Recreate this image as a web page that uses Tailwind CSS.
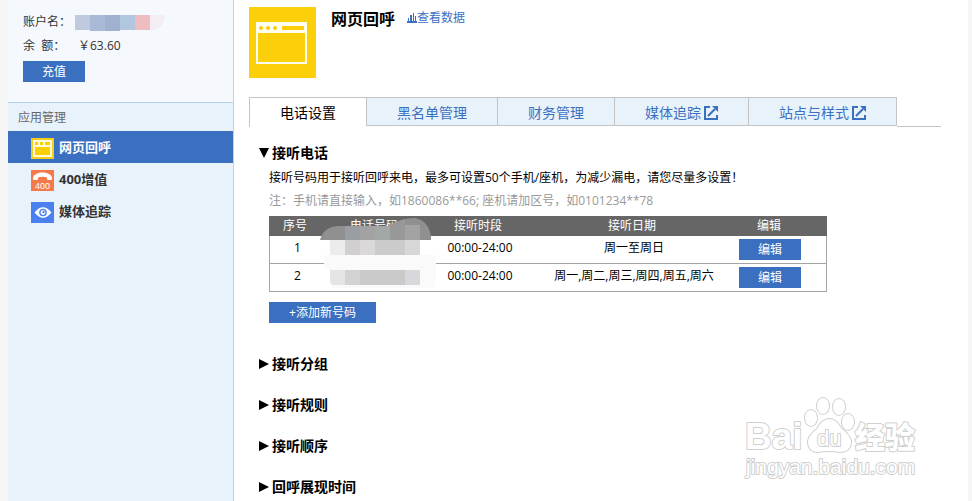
<!DOCTYPE html>
<html lang="zh-CN">
<head>
    <meta charset="UTF-8">
    <meta name="viewport" content="width=device-width, initial-scale=1.0">
    <title>网页回呼</title>
    <script src="https://cdn.jsdelivr.net/npm/@tailwindcss/browser@4"></script>
</head>
<body class="bg-[#f5f5f5] font-['Open_Sans','Noto_Sans_CJK_SC',sans-serif] text-xs text-black">

    <div class="relative flex min-h-screen pl-2 pr-1">

        <!-- Sidebar -->
        <aside class="w-[226px] shrink-0 border-r border-[#c3d3e2] bg-[#e8f2fb]">
            <div class="border-b border-[#b5cfe6] bg-[#f5f9fe] px-[15px] pt-3 pb-5 leading-5 text-[#333]">
                <div class="flex items-center">
                    <span class="w-[52px] whitespace-nowrap">账户名：</span>
                    <svg class="h-[17px] w-[90px]" viewBox="0 0 90 17" aria-hidden="true">
                        <path d="M0 1h15v15H0z" fill="#bfcadf"/>
                        <path d="M15 1h15v16H15z" fill="#a9bad6"/>
                        <path d="M30 1h15v16H30z" fill="#a0b1cf"/>
                        <path d="M45 1h15v15H45z" fill="#b1c6df"/>
                        <path d="M60 1h15v15H60z" fill="#edbdc1"/>
                        <path d="M75 1h15q-1 12-10 15h-5z" fill="#f4eef4"/>
                    </svg>
                </div>
                <div class="mt-1 flex">
                    <span class="w-[55px] whitespace-pre">余  额：</span>
                    <span>￥63.60</span>
                </div>
                <button type="button" class="mt-[5px] block h-[21px] w-[62px] bg-[#3b70c0] text-white">充值</button>
            </div>
            <h2 class="h-7 pl-[10px] leading-[30px] text-[#666]">应用管理</h2>
            <nav class="text-[13px] font-bold text-[#333]">
                <a href="#" class="flex h-8 items-center gap-[5px] bg-[#3b70c0] pt-[2px] pl-[23px] text-white">
                    <svg class="h-[21px] w-[23px]" viewBox="0 0 23 21" aria-hidden="true">
                        <path d="M0 0h23v21H0z" fill="#f5cf1c"/>
                        <path d="M2 2h19v17H2z" fill="#fffbd8"/>
                        <path d="M4 4h3v3H4zM9 4h3v3H9zM14 4h5v3h-5zM4 9h15v8H4z" fill="#fad000"/>
                    </svg>
                    <span>网页回呼</span>
                </a>
                <a href="#" class="flex h-8 items-center gap-[5px] pt-[2px] pl-[23px]">
                    <svg class="h-[21px] w-[23px]" viewBox="0 0 23 21" aria-hidden="true">
                        <path d="M0 0h23v21H0z" fill="#f47a4a"/>
                        <path d="M2 8c0-3 4-5.500 9.500-5.500S21 5 21 8v1q0 1-1 1h-3q-1 0-1-1V7.500q-4.500-1.500-9 0V9q0 1-1 1H3q-1 0-1-1z" fill="#fff"/>
                        <text x="11.500" y="19" font-size="9" font-weight="400" text-anchor="middle" fill="#fff" font-family="Liberation Sans, sans-serif">400</text>
                    </svg>
                    <span>400增值</span>
                </a>
                <a href="#" class="flex h-8 items-center gap-[5px] pt-[2px] pl-[23px]">
                    <svg class="h-[21px] w-[23px]" viewBox="0 0 23 21" aria-hidden="true">
                        <path d="M0 0h23v21H0z" fill="#4a80f0"/>
                        <path d="M3.500 10.500Q12 0 20.500 10.500 12 21 3.500 10.500z" fill="#fff"/>
                        <circle cx="12" cy="10.500" r="3.800" fill="#4a80f0"/>
                        <circle cx="12" cy="10.500" r="2.400" fill="#fff"/>
                        <circle cx="12.500" cy="10" r="1.200" fill="#4a80f0"/>
                    </svg>
                    <span>媒体追踪</span>
                </a>
            </nav>
        </aside>

        <!-- Content -->
        <main class="min-w-0 flex-1 bg-white pt-[7px] pr-[27px] pl-[15px]">
            <header class="flex items-start">
                <svg class="h-[71px] w-[67px]" viewBox="0 0 67 71" aria-hidden="true">
                    <path d="M0 0h67v71H0z" fill="#fbcf0a"/>
                    <path d="M7 15h51v42H7z" fill="#fffdf0"/>
                    <path d="M9 26h47v29H9zM33 19h22v4H33z" fill="#fbcf0a"/>
                    <circle cx="12" cy="21" r="2" fill="#fbcf0a"/>
                    <circle cx="19" cy="21" r="2" fill="#fbcf0a"/>
                    <circle cx="26" cy="21" r="2" fill="#fbcf0a"/>
                </svg>
                <h1 class="ml-[15px] text-base leading-6 font-bold">网页回呼</h1>
                <a href="#" class="ml-3 flex items-center leading-[21px] text-[#3b70c0]">
                    <svg class="h-[10px] w-[10px]" viewBox="0 0 10 10" fill="currentColor" aria-hidden="true">
                        <path d="M0 8h10v2H0zM1 5h1v4H1zM3 2h2v7H3zM6 0h1v9H6zM8 3h1v6H8z"/>
                    </svg>
                    查看数据
                </a>
            </header>

            <nav class="mt-[19px] flex h-[30px] items-start text-sm text-[#3b70c0]">
                <a href="#" class="flex h-[30px] w-[117px] items-center justify-center border-t border-l border-[#c4c4c4] text-black">电话设置</a>
                <a href="#" class="flex h-[29px] w-[131px] items-center justify-center border-y border-l border-[#c4c4c4] bg-[#e8f2fb] pt-[2px]">黑名单管理</a>
                <a href="#" class="flex h-[29px] w-[117px] items-center justify-center border-y border-l border-[#c4c4c4] bg-[#e8f2fb] pt-[2px]">财务管理</a>
                <a href="#" class="flex h-[29px] w-[134px] items-center justify-center gap-[3px] border-y border-l border-[#c4c4c4] bg-[#e8f2fb] pt-[2px]">
                    媒体追踪
                    <svg class="h-[14px] w-[14px]" viewBox="0 0 14 14" fill="none" stroke="currentColor" stroke-width="2" aria-hidden="true">
                        <path d="M6 1H1v12h12V9M4 10l7-7"/>
                        <path d="M8 0h6v6z" fill="currentColor" stroke="none"/>
                    </svg>
                </a>
                <a href="#" class="flex h-[29px] w-[149px] items-center justify-center gap-[3px] border border-[#c4c4c4] bg-[#e8f2fb] pt-[2px]">
                    站点与样式
                    <svg class="h-[14px] w-[14px]" viewBox="0 0 14 14" fill="none" stroke="currentColor" stroke-width="2" aria-hidden="true">
                        <path d="M6 1H1v12h12V9M4 10l7-7"/>
                        <path d="M8 0h6v6z" fill="currentColor" stroke="none"/>
                    </svg>
                </a>
                <span class="h-[30px] flex-1 border-b border-[#c4c4c4]"></span>
            </nav>

            <section class="mt-4 pl-[10px]">
                <button type="button" class="flex h-5 items-center gap-[3px] text-sm font-bold">
                    <svg class="h-[10px] w-[10px]" viewBox="0 0 10 10" aria-hidden="true"><path d="M0 0h10L5 10z"/></svg>
                    接听电话
                </button>
                <div class="pl-[10px]">
                    <p class="mt-[5px] leading-5">接听号码用于接听回呼来电，最多可设置50个手机/座机，为减少漏电，请您尽量多设置！</p>
                    <p class="mt-[3px] leading-5 text-[#999]">注：手机请直接输入，如1860086**66; 座机请加区号，如0101234**78</p>

                    <div class="relative mt-[5px] w-[558px]">
                        <table class="w-full table-fixed border-separate border-spacing-0 text-center leading-5">
                            <thead>
                                <tr class="h-5 bg-[#666] text-white">
                                    <th class="w-[56px] p-0 pr-1 font-normal">序号</th>
                                    <th class="w-[98px] p-0 font-normal">电话号码</th>
                                    <th class="w-[110px] p-0 font-normal">接听时段</th>
                                    <th class="w-[198px] p-0 font-normal">接听日期</th>
                                    <th class="w-[96px] p-0 pr-5 font-normal">编辑</th>
                                </tr>
                            </thead>
                            <tbody>
                                <tr class="h-7">
                                    <td class="border-b border-l border-[#a5a5a5] p-0 pb-1">1</td>
                                    <td class="border-b border-[#a5a5a5] p-0"></td>
                                    <td class="border-b border-[#a5a5a5] p-0 pb-1 pl-1">00:00-24:00</td>
                                    <td class="border-b border-[#a5a5a5] p-0 pb-1 pl-1">周一至周日</td>
                                    <td class="border-r border-b border-[#a5a5a5] p-0 pl-2">
                                        <button type="button" class="block h-[21px] w-[62px] bg-[#3b70c0] text-white">编辑</button>
                                    </td>
                                </tr>
                                <tr class="h-7">
                                    <td class="border-b border-l border-[#a5a5a5] p-0 pb-1">2</td>
                                    <td class="border-b border-[#a5a5a5] p-0"></td>
                                    <td class="border-b border-[#a5a5a5] p-0 pb-1 pl-1">00:00-24:00</td>
                                    <td class="border-b border-[#a5a5a5] p-0 pb-1 pl-1">周一,周二,周三,周四,周五,周六</td>
                                    <td class="border-r border-b border-[#a5a5a5] p-0 pl-2">
                                        <button type="button" class="block h-[21px] w-[62px] bg-[#3b70c0] text-white">编辑</button>
                                    </td>
                                </tr>
                            </tbody>
                        </table>
                        <!-- masked phone numbers -->
                        <svg class="absolute top-0 left-[50px] h-[76px] w-[118px]" viewBox="0 0 118 76" aria-hidden="true">
                            <path d="M1 24Q5 10 20 10H74Q82 2 96 2 110 5 112 21V24z" fill="#909090"/>
                            <path d="M26 10h15v14H26z" fill="#9a9ea3"/>
                            <path d="M41 10h15v14H41z" fill="#a2a2a2"/>
                            <path d="M56 10h15v14H56z" fill="#a3a7a8"/>
                            <path d="M71 9Q77 5 86 3v21H71z" fill="#989898"/>
                            <path d="M86 9h15v15H86z" fill="#a3a3a3"/>
                            <path d="M11 24h15v15H11z" fill="#ececec"/>
                            <path d="M26 24h15v15H26z" fill="#d2d0cf"/>
                            <path d="M41 24h15v15H41z" fill="#dad8d8"/>
                            <path d="M56 24h30v15H56z" fill="#cbcbcb"/>
                            <path d="M86 24h15v15H86z" fill="#d7d7d9"/>
                            <path d="M5 39H117V54L116 72H13Q11 70 11 54 5 54 5 48z" fill="#fafafa"/>
                            <path d="M11 54h15v15H15q-4 0-4-4z" fill="#e5e5e5"/>
                            <path d="M26 54h15v15H26z" fill="#d4d3d2"/>
                            <path d="M41 54h45v15H41z" fill="#cacaca"/>
                            <path d="M86 54h15v15H86z" fill="#d8d8dc"/>
                        </svg>
                    </div>

                    <button type="button" class="mt-[10px] block h-[21px] w-[107px] bg-[#3b70c0] text-white">+添加新号码</button>
                </div>
            </section>

            <section class="mt-[31px] flex flex-col items-start gap-[21px] pl-[10px] text-sm font-bold">
                <button type="button" class="flex h-5 items-center gap-[3px]">
                    <svg class="h-[10px] w-[10px]" viewBox="0 0 10 10" aria-hidden="true"><path d="M0 0l10 5-10 5z"/></svg>
                    接听分组
                </button>
                <button type="button" class="flex h-5 items-center gap-[3px]">
                    <svg class="h-[10px] w-[10px]" viewBox="0 0 10 10" aria-hidden="true"><path d="M0 0l10 5-10 5z"/></svg>
                    接听规则
                </button>
                <button type="button" class="flex h-5 items-center gap-[3px]">
                    <svg class="h-[10px] w-[10px]" viewBox="0 0 10 10" aria-hidden="true"><path d="M0 0l10 5-10 5z"/></svg>
                    接听顺序
                </button>
                <button type="button" class="flex h-5 items-center gap-[3px]">
                    <svg class="h-[10px] w-[10px]" viewBox="0 0 10 10" aria-hidden="true"><path d="M0 0l10 5-10 5z"/></svg>
                    回呼展现时间
                </button>
            </section>
        </main>

        <!-- Watermark -->
        <svg class="pointer-events-none absolute right-[48px] bottom-[16px] h-[90px] w-[184px]" viewBox="0 0 184 90" fill="#fff" stroke="#d0d0d0" stroke-width="2" paint-order="stroke" stroke-linejoin="round" font-weight="700" aria-hidden="true">
            <text x="5" y="54" font-size="37" font-family="Liberation Sans, sans-serif">Bai</text>
            <text x="115" y="53" font-size="30" font-weight="900" font-family="Noto Sans CJK SC, sans-serif">经验</text>
            <g stroke-width="2">
                <ellipse cx="71" cy="23" rx="6" ry="8"/>
                <ellipse cx="83" cy="11" rx="6" ry="8"/>
                <ellipse cx="99" cy="12" rx="6" ry="8"/>
                <ellipse cx="108" cy="27" rx="6" ry="8"/>
                <path d="M89 24q7 0 12 9 9 7 10 13 0 11-11 11-11-2-22 0-10 0-10-11 1-6 9-12 5-10 12-10z"/>
            </g>
            <text x="77" y="51" font-size="22" font-weight="400" font-family="Liberation Sans, sans-serif">du</text>
            <text x="6" y="79" font-size="21" font-weight="400" font-family="Liberation Sans, sans-serif">jingyan.baidu.com</text>
        </svg>
    </div>

</body>
</html>
